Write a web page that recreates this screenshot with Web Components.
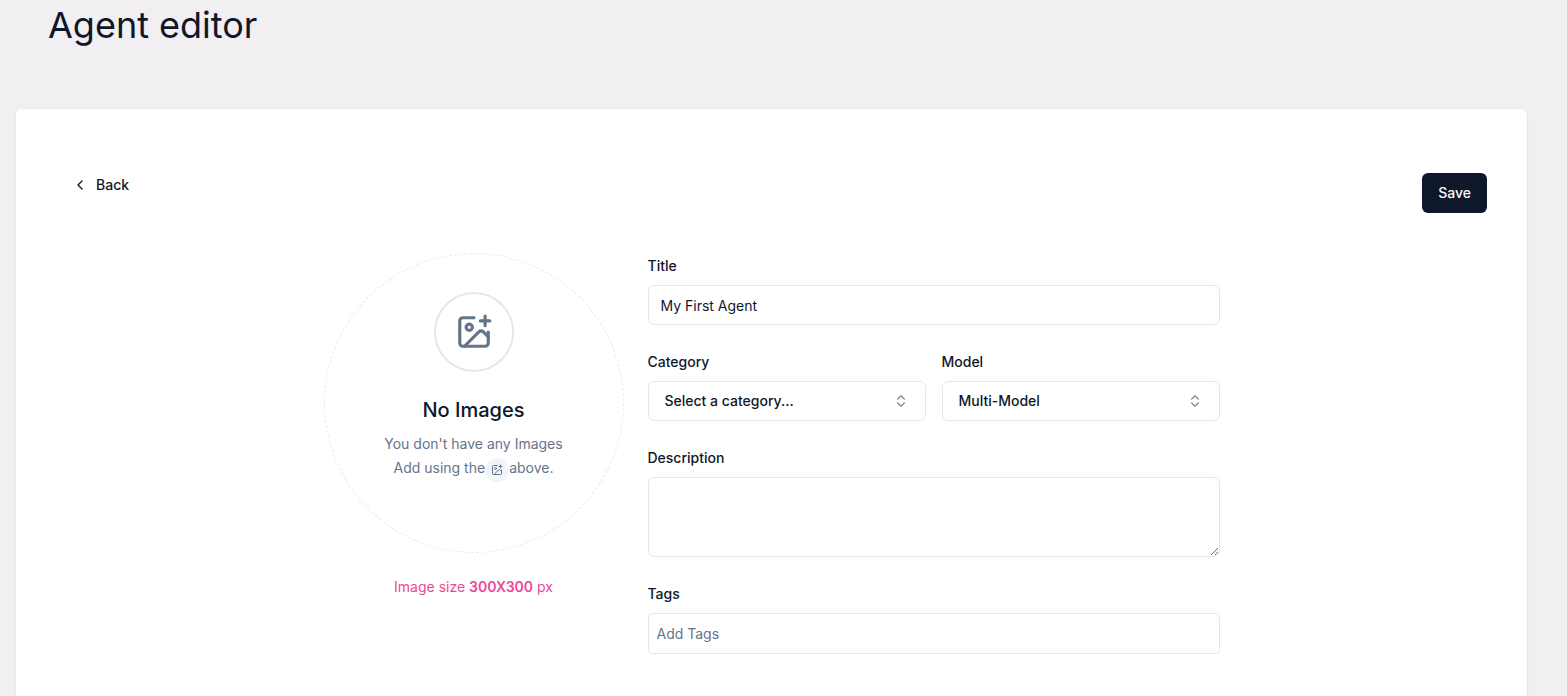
<!DOCTYPE html>
<html lang="en">
<head>
<meta charset="utf-8">
<meta name="viewport" content="width=device-width, initial-scale=1">
<title>Agent editor</title>
<style>
  :root {
    --ink: #0f172a;
    --muted: #64748b;
    --line: #e2e8f0;
    --page: #f1eff2;
    --radius: 6px;
  }
  body {
    margin: 0;
    background: var(--page);
    color: var(--ink);
    font: 14px/24px Inter, "Liberation Sans", sans-serif;
  }
</style>
</head>
<body>
<agent-editor></agent-editor>

<script>
  const define = (name, html, setup) => {
    const template = document.createElement('template');
    template.innerHTML = html;
    customElements.define(name, class extends HTMLElement {
      constructor() {
        super();
        this.attachShadow({ mode: 'open' }).append(template.content.cloneNode(true));
      }
      connectedCallback() {
        if (setup) setup(this, this.shadowRoot);
      }
    });
  };

  define('image-plus-icon', `
    <style>
      :host { display: block; width: 38px; height: 38px; }
      svg { display: block; width: 100%; height: 100%; }
    </style>
    <svg viewBox="0 0 24 24" fill="none" stroke="currentColor" stroke-width="2" stroke-linecap="round" stroke-linejoin="round" aria-hidden="true">
      <path d="M21 12v7a2 2 0 0 1-2 2H5a2 2 0 0 1-2-2V5a2 2 0 0 1 2-2h7"/>
      <path d="M16 5h6M19 2v6"/>
      <circle cx="9" cy="9" r="2"/>
      <path d="m21 15-3.086-3.086a2 2 0 0 0-2.828 0L6 21"/>
    </svg>`);

  define('action-button', `
    <style>
      :host { display: block; }
      button {
        display: flex; align-items: center; gap: 8px;
        height: 40px; padding: 0 16px; border: 0; border-radius: var(--radius);
        background: transparent; color: var(--ink);
        font: inherit; font-weight: 500; cursor: pointer;
      }
      :host([primary]) button { background: var(--ink); color: #f8fafc; }
    </style>
    <button type="button"><slot name="icon"></slot><slot></slot></button>`);

  define('text-field', `
    <style>
      :host { display: flex; flex-direction: column; gap: 6px; }
      label { font-weight: 500; line-height: 26px; }
      input {
        box-sizing: border-box; width: 100%; height: 40px; padding: 0 12px;
        border: 1px solid var(--line); border-radius: var(--radius);
        background: #fff; color: inherit; font: inherit;
      }
      :host([compact]) input { height: 41px; padding: 0 8px; border-radius: 4px; }
      input::placeholder { color: var(--muted); opacity: 1; }
    </style>
    <label for="control"></label>
    <input id="control" type="text">`, (host, root) => {
      root.querySelector('label').textContent = host.getAttribute('label');
      const input = root.querySelector('input');
      input.value = host.getAttribute('value') || '';
      input.placeholder = host.getAttribute('placeholder') || '';
    });

  define('select-field', `
    <style>
      :host { display: flex; flex-direction: column; gap: 6px; min-width: 0; }
      label { font-weight: 500; line-height: 26px; }
      .box { display: grid; align-items: center; }
      select, svg { grid-area: 1 / 1; }
      select {
        appearance: none; box-sizing: border-box; width: 100%; height: 40px; padding: 0 40px 0 16px;
        border: 1px solid var(--line); border-radius: var(--radius);
        background: #fff; color: inherit; font: inherit; font-weight: 500;
      }
      svg { justify-self: end; width: 16px; height: 16px; margin-right: 17px; opacity: .5; pointer-events: none; }
    </style>
    <label for="control"></label>
    <div class="box">
      <select id="control"></select>
      <svg viewBox="0 0 24 24" fill="none" stroke="currentColor" stroke-width="2" stroke-linecap="round" stroke-linejoin="round" aria-hidden="true"><path d="m7 15 5 5 5-5M7 9l5-5 5 5"/></svg>
    </div>`, (host, root) => {
      root.querySelector('label').textContent = host.getAttribute('label');
      root.querySelector('select').replaceChildren(new Option(host.getAttribute('value')));
    });

  define('area-field', `
    <style>
      :host { display: flex; flex-direction: column; gap: 6px; }
      label { font-weight: 500; line-height: 26px; }
      textarea {
        display: block; box-sizing: border-box; width: 100%; height: 80px; padding: 8px 12px;
        border: 1px solid var(--line); border-radius: var(--radius);
        background: #fff; color: inherit; font: inherit; resize: vertical;
      }
    </style>
    <label for="control"></label>
    <textarea id="control"></textarea>`, (host, root) => {
      root.querySelector('label').textContent = host.getAttribute('label');
    });

  define('image-picker', `
    <style>
      :host { display: flex; flex-direction: column; align-items: center; gap: 22px; }
      .drop {
        box-sizing: border-box; width: 300px; height: 300px; padding-top: 38px;
        border: 1px dashed var(--line); border-radius: 50%;
        display: flex; flex-direction: column; align-items: center;
        color: var(--muted); text-align: center;
      }
      button {
        box-sizing: border-box; width: 80px; height: 80px; padding: 0;
        display: flex; align-items: center; justify-content: center;
        border: 2px solid var(--line); border-radius: 50%;
        background: #fff; color: inherit; cursor: pointer;
      }
      h2 { margin: 24px 0 8px; color: var(--ink); font-size: 20px; line-height: 28px; font-weight: 500; }
      p { margin: 0; }
      .line { display: flex; justify-content: center; }
      .chip {
        display: flex; align-items: center; justify-content: center;
        width: 24px; height: 24px; margin-top: 2px; border-radius: 50%; background: #f1f5f9;
      }
      .chip image-plus-icon { width: 12px; height: 12px; }
      .hint { color: #ec4899; }
      b { font-weight: 600; }
    </style>
    <div class="drop">
      <button type="button" aria-label="Add image"><image-plus-icon></image-plus-icon></button>
      <h2>No Images</h2>
      <p>You don't have any Images</p>
      <p class="line"><span>Add using the</span><span class="chip"><image-plus-icon></image-plus-icon></span><span>above.</span></p>
    </div>
    <p class="hint">Image size <b>300X300</b> px</p>`);

  define('editor-card', `
    <style>
      :host {
        display: block; box-sizing: border-box; min-height: 640px;
        margin: 0 40px 0 16px; padding: 56px 40px 40px;
        border-radius: var(--radius); background: #fff;
        box-shadow: 0 1px 3px rgb(0 0 0 / .1);
      }
      .bar { display: flex; justify-content: space-between; align-items: flex-start; margin-bottom: 40px; }
      .save { margin-top: 8px; }
      .body {
        display: grid; grid-template-columns: 300px minmax(0, 1fr); gap: 24px;
        align-items: start; max-width: 896px; margin: 0 auto;
      }
    </style>
    <div class="bar">
      <slot name="back"></slot>
      <div class="save"><slot name="save"></slot></div>
    </div>
    <div class="body"><slot></slot></div>`);

  define('agent-editor', `
    <style>
      :host { display: block; height: 100vh; overflow: hidden; }
      header { padding: 5px 48px 64px; }
      h1 { margin: 0; font-size: 36px; line-height: 40px; font-weight: 400; }
      form { display: flex; flex-direction: column; gap: 24px; }
      .pair { display: grid; grid-template-columns: 1fr 1fr; gap: 16px; }
      .chevron { display: block; width: 16px; height: 16px; }
    </style>
    <header><h1>Agent editor</h1></header>
    <editor-card>
      <action-button slot="back">
        <svg class="chevron" slot="icon" viewBox="0 0 24 24" fill="none" stroke="currentColor" stroke-width="2" stroke-linecap="round" stroke-linejoin="round" aria-hidden="true"><path d="m15 18-6-6 6-6"/></svg>
        Back
      </action-button>
      <action-button slot="save" primary>Save</action-button>
      <image-picker></image-picker>
      <form>
        <text-field label="Title" value="My First Agent"></text-field>
        <div class="pair">
          <select-field label="Category" value="Select a category..."></select-field>
          <select-field label="Model" value="Multi-Model"></select-field>
        </div>
        <area-field label="Description"></area-field>
        <text-field label="Tags" placeholder="Add Tags" compact></text-field>
      </form>
    </editor-card>`);
</script>
</body>
</html>
